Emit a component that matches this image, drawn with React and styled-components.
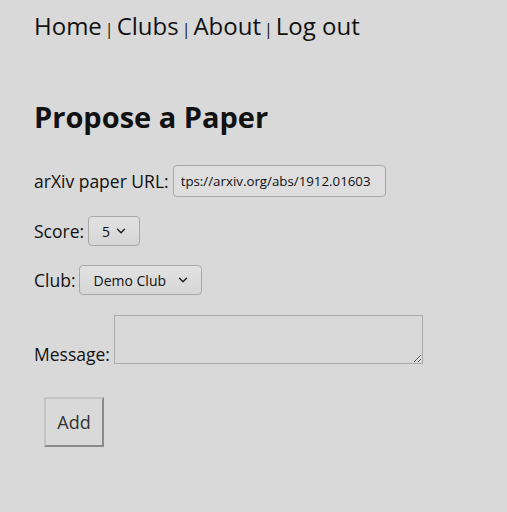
import React from "react";
import styled, { createGlobalStyle } from "styled-components";
import { ChevronDown } from "lucide-react";

const Global = createGlobalStyle`
    html, body {
        margin: 0;
        background: #d9d9d9;
        font-family: "Open Sans", "Noto Sans", sans-serif;
        color: #111;
    }
`

const Page = styled.div`
    padding: 8px 34px;
`

const Nav = styled.nav`
    display: flex;
    align-items: baseline;
    font-size: 24px;
    line-height: 36px;
`

const NavLink = styled.a`
    color: #111;
    text-decoration: none;
`

const Sep = styled.span`
    font-size: 16px;
    margin: 0 3px;
`

const Title = styled.h1`
    font-size: 29px;
    font-weight: 700;
    margin: 50px 0 29px;
`

const Row = styled.div`
    display: flex;
    align-items: ${props => props.bottom ? 'flex-end' : 'center'};
    gap: 4px;
    font-size: 17.5px;
    margin-bottom: ${props => props.mb || 19}px;
`

const TextInput = styled.input`
    width: 213px;
    height: 32px;
    box-sizing: border-box;
    padding: 0 7px;
    font: 13.3px "Open Sans", sans-serif;
    color: #111;
    background: #dedede;
    border: 1px solid #a8a8a8;
    border-radius: 4px;
`

const SelectWrap = styled.div`
    position: relative;
    display: inline-flex;
`

const Select = styled.select`
    appearance: none;
    height: 30px;
    width: ${props => props.w}px;
    box-sizing: border-box;
    padding: 0 0 0 ${props => props.pl}px;
    font: 14px "Open Sans", sans-serif;
    color: #111;
    background: linear-gradient(#e2e2e2, #d6d6d6);
    border: 1px solid #a8a8a8;
    border-radius: 4px;
`

const Chevron = styled(ChevronDown)`
    position: absolute;
    right: ${props => props.r}px;
    top: 8px;
    pointer-events: none;
`

const TextArea = styled.textarea`
    width: 309px;
    height: 49px;
    box-sizing: border-box;
    background: #d9d9d9;
    border: 1px solid #aaa;
    margin-bottom: 2px;
`

const AddButton = styled.button`
    margin: 12px 0 0 10px;
    width: 60px;
    height: 50px;
    font: 18px "Open Sans", sans-serif;
    color: #333;
    background: #d9d9d9;
    border: 2px solid;
    border-color: #c4c4c4 #8a8a8a #8a8a8a #c4c4c4;
`

export default function App() {
    return (
        <Page>
            <Global />
            <Nav>
                <NavLink href="#">Home</NavLink>
                <Sep>|</Sep>
                <NavLink href="#">Clubs</NavLink>
                <Sep>|</Sep>
                <NavLink href="#">About</NavLink>
                <Sep>|</Sep>
                <NavLink href="#">Log out</NavLink>
            </Nav>
            <Title>Propose a Paper</Title>
            <Row>
                arXiv paper URL:
                <TextInput defaultValue="tps://arxiv.org/abs/1912.01603" />
            </Row>
            <Row>
                Score:
                <SelectWrap>
                    <Select w={52} pl={13} defaultValue="5">
                        {[1, 2, 3, 4, 5].map(n => <option key={n}>{n}</option>)}
                    </Select>
                    <Chevron r={12} size={14} strokeWidth={2.5} color="#222" />
                </SelectWrap>
            </Row>
            <Row mb={20}>
                Club:
                <SelectWrap>
                    <Select w={123} pl={13}>
                        <option>Demo Club</option>
                    </Select>
                    <Chevron r={12} size={14} strokeWidth={2.5} color="#222" />
                </SelectWrap>
            </Row>
            <Row bottom>
                Message:
                <TextArea />
            </Row>
            <AddButton>Add</AddButton>
        </Page>
    );
}
